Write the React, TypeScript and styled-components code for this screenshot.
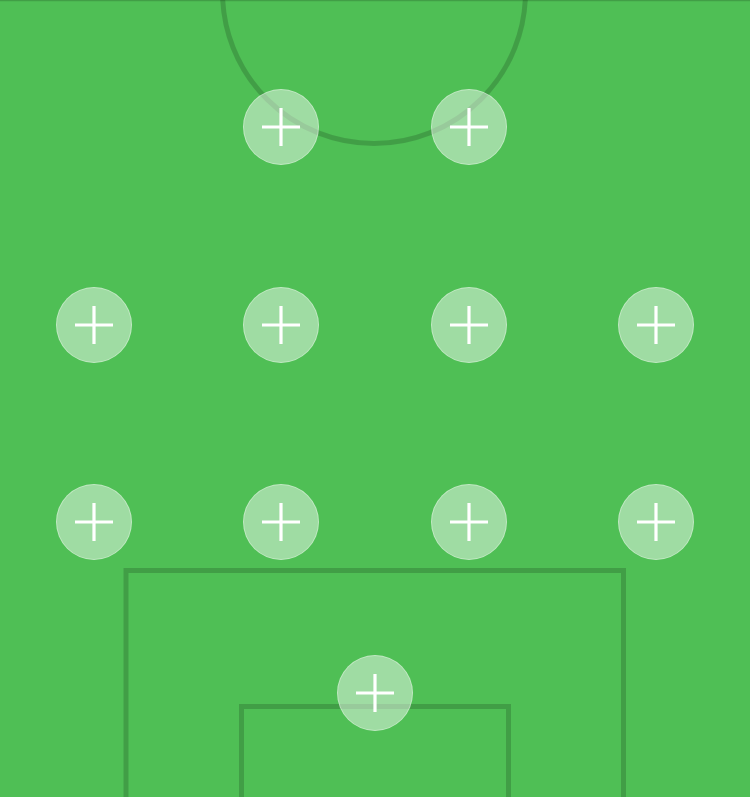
import React from "react";
import styled, { createGlobalStyle } from "styled-components";

const Global = createGlobalStyle`
  html, body { margin: 0; padding: 0; background: #4fbf55; }
  body { font-family: "Liberation Sans", Arial, sans-serif; overflow: hidden; }
`;

const Pitch = styled.div`
  position: relative;
  width: 750px;
  height: 797px;
  overflow: hidden;
  background: #4fbf55;
`;

const Markings = styled.svg`
  position: absolute;
  inset: 0;
  width: 750px;
  height: 797px;
  pointer-events: none;
`;

const Formation = styled.div`
  position: relative;
  display: flex;
  flex-direction: column;
  padding-top: 89px;
`;

const Row = styled.div<{ $top: number }>`
  display: grid;
  grid-template-columns: repeat(4, 1fr);
  margin-top: ${(p) => p.$top}px;
`;

const KeeperRow = styled.div<{ $top: number }>`
  display: flex;
  justify-content: center;
  margin-top: ${(p) => p.$top}px;
`;

const Slot = styled.button<{ $col?: number }>`
  grid-column: ${(p) => (p.$col ? `${p.$col}` : "auto")};
  justify-self: center;
  width: 76px;
  height: 76px;
  border-radius: 50%;
  border: 1.5px solid rgba(255, 255, 255, 0.35);
  background: rgba(255, 255, 255, 0.46);
  padding: 0;
  display: flex;
  align-items: center;
  justify-content: center;
  cursor: pointer;
  box-sizing: border-box;
`;

const Plus = () => (
  <svg width="38" height="38" viewBox="0 0 38 38">
    <path d="M19 0 V38 M0 19 H38" stroke="#ffffff" strokeWidth="3.2" />
  </svg>
);

const line = "rgba(0,0,0,0.17)";

export default function App() {
  return (
    <>
      <Global />
      <Pitch>
        <Markings viewBox="0 0 750 797">
          <line x1="0" y1="0.5" x2="750" y2="0.5" stroke={line} strokeWidth="1.5" />
          <circle cx="374" cy="-8" r="151.5" fill="none" stroke={line} strokeWidth="5" />
          <path d="M126 800 V570.5 H623.5 V800" fill="none" stroke={line} strokeWidth="5" />
          <path d="M241.5 800 V706.5 H508.5 V800" fill="none" stroke={line} strokeWidth="5" />
        </Markings>
        <Formation>
          <Row $top={0}>
            <Slot $col={2}><Plus /></Slot>
            <Slot $col={3}><Plus /></Slot>
          </Row>
          <Row $top={122}>
            <Slot><Plus /></Slot>
            <Slot><Plus /></Slot>
            <Slot><Plus /></Slot>
            <Slot><Plus /></Slot>
          </Row>
          <Row $top={121}>
            <Slot><Plus /></Slot>
            <Slot><Plus /></Slot>
            <Slot><Plus /></Slot>
            <Slot><Plus /></Slot>
          </Row>
          <KeeperRow $top={95}>
            <Slot><Plus /></Slot>
          </KeeperRow>
        </Formation>
      </Pitch>
    </>
  );
}
